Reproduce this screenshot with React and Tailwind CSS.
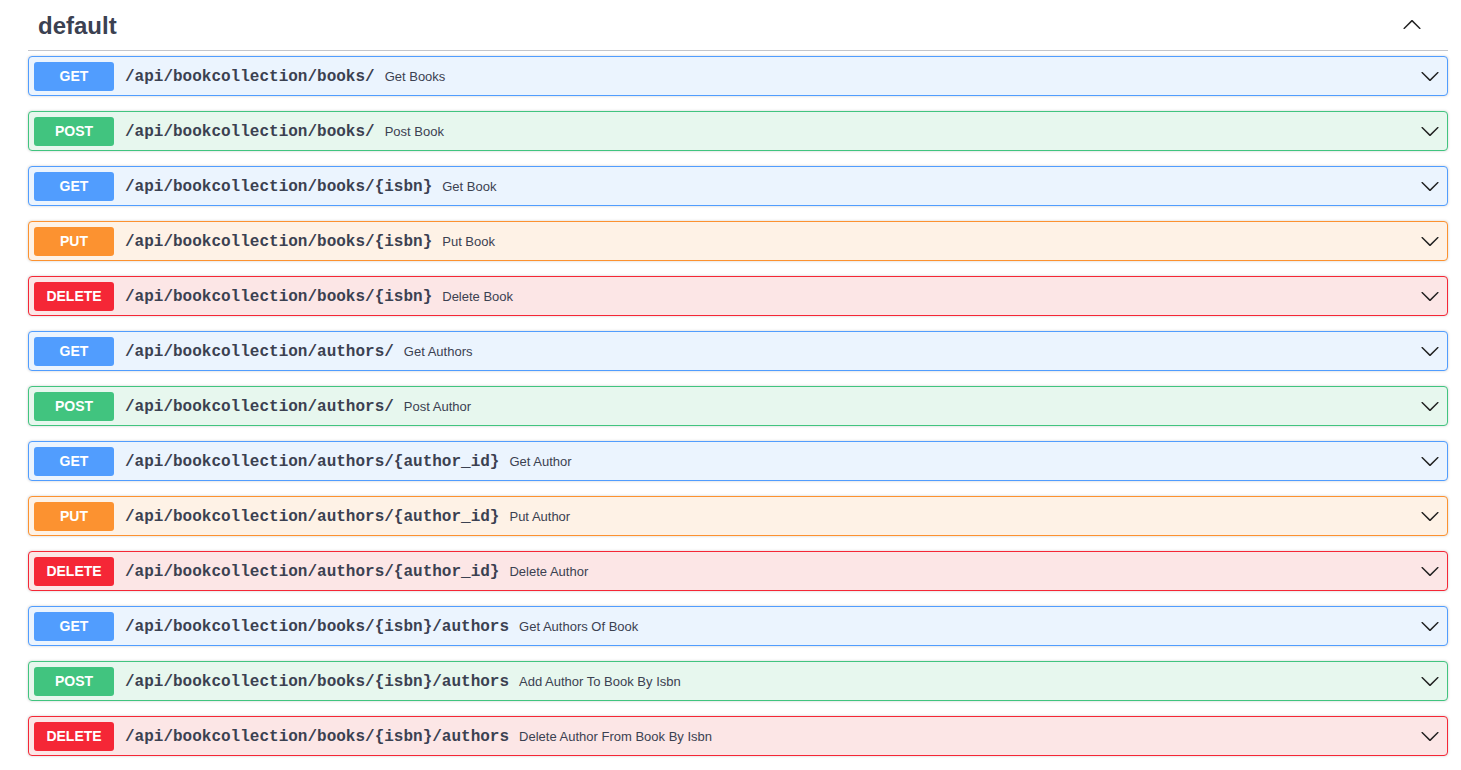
import React from 'react';

const METHOD = {
  GET: { badge: 'bg-[#519dfe]', row: 'bg-[#ebf4fe] border-[#519dfe]' },
  POST: { badge: 'bg-[#41c47f]', row: 'bg-[#e7f7ee] border-[#41c47f]' },
  PUT: { badge: 'bg-[#fc9230]', row: 'bg-[#fef2e6] border-[#fc9230]' },
  DELETE: { badge: 'bg-[#f52736]', row: 'bg-[#fce6e6] border-[#f52736]' },
};

const ops = [
  ['GET', '/api/bookcollection/books/', 'Get Books'],
  ['POST', '/api/bookcollection/books/', 'Post Book'],
  ['GET', '/api/bookcollection/books/{isbn}', 'Get Book'],
  ['PUT', '/api/bookcollection/books/{isbn}', 'Put Book'],
  ['DELETE', '/api/bookcollection/books/{isbn}', 'Delete Book'],
  ['GET', '/api/bookcollection/authors/', 'Get Authors'],
  ['POST', '/api/bookcollection/authors/', 'Post Author'],
  ['GET', '/api/bookcollection/authors/{author_id}', 'Get Author'],
  ['PUT', '/api/bookcollection/authors/{author_id}', 'Put Author'],
  ['DELETE', '/api/bookcollection/authors/{author_id}', 'Delete Author'],
  ['GET', '/api/bookcollection/books/{isbn}/authors', 'Get Authors Of Book'],
  ['POST', '/api/bookcollection/books/{isbn}/authors', 'Add Author To Book By Isbn'],
  ['DELETE', '/api/bookcollection/books/{isbn}/authors', 'Delete Author From Book By Isbn'],
];

function Arrow({ up }) {
  return (
    <svg width="20" height="20" viewBox="0 0 20 20" className={up ? 'rotate-180' : ''} fill="#222">
      <path d="M17.418 6.109c.272-.268.709-.268.979 0s.271.701 0 .969l-7.908 7.83c-.27.268-.707.268-.979 0l-7.908-7.83c-.27-.268-.27-.701 0-.969.271-.268.709-.268.979 0L10 13.25l7.418-7.141z" />
    </svg>
  );
}

function OpRow({ method, path, summary }) {
  const m = METHOD[method];
  return (
    <div className={`flex items-center h-[40px] border rounded-[4px] px-[5px] shadow-[0_0_3px_rgba(0,0,0,0.19)] ${m.row}`}>
      <span className={`w-[80px] h-[29px] flex items-center justify-center rounded-[3px] text-white text-[14px] font-bold ${m.badge}`}>
        {method}
      </span>
      <span className="pl-[11px] pr-[10px] pt-[1px] text-[16px] font-bold text-[#3b4151] font-['Liberation_Mono',monospace]">
        {path}
      </span>
      <span className="pt-[1px] text-[13px] text-[#3b4151] flex-1">{summary}</span>
      <span className="mr-[2px] flex items-center">
        <Arrow />
      </span>
    </div>
  );
}

export default function App() {
  return (
    <div className="bg-white min-h-[770px] font-['Liberation_Sans',Arial,sans-serif]">
      <div className="ml-[28px] w-[1420px]">
        <div className="flex items-center h-[51px] border-b border-[#c4c6cb] pl-[10px] pr-[26px] mb-[5px]">
          <h3 className="flex-1 pt-[2px] text-[24px] font-bold text-[#3b4151]">default</h3>
          <Arrow up />
        </div>
        <div className="flex flex-col gap-[15px]">
          {ops.map(([method, path, summary], i) => (
            <OpRow key={i} method={method} path={path} summary={summary} />
          ))}
        </div>
      </div>
    </div>
  );
}
